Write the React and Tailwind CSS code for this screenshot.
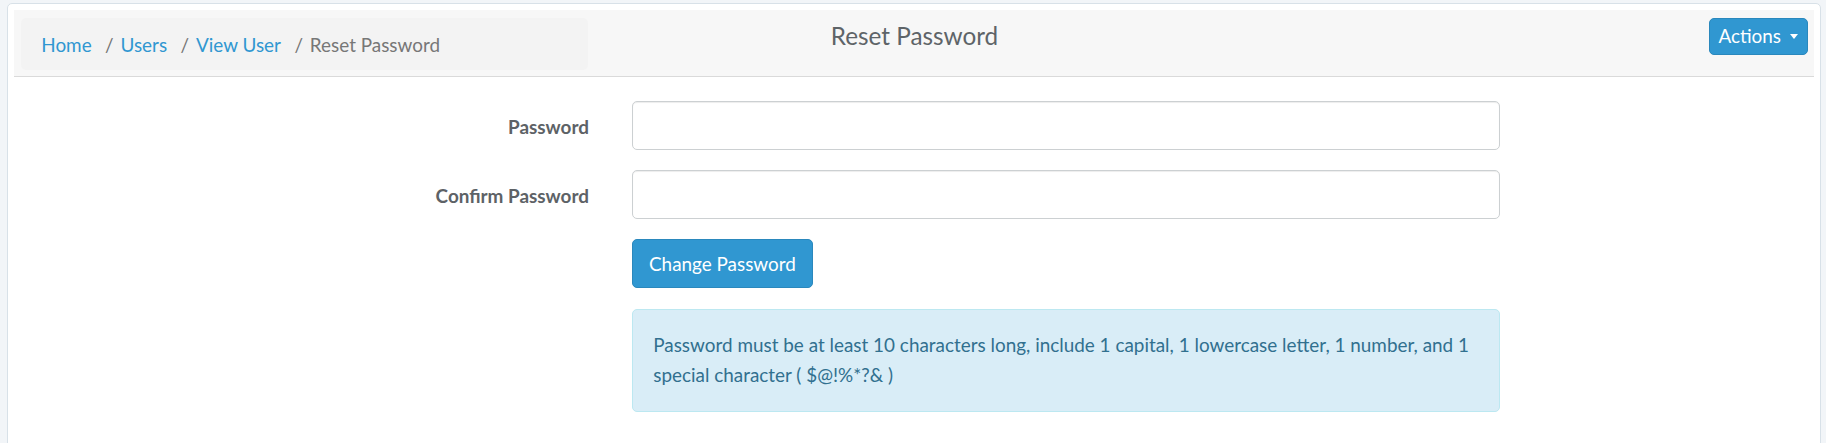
import { useState } from "react";

// Breadcrumb trail shown on the left of the panel header
const CRUMBS = [
  { label: "Home", href: "#" },
  { label: "Users", href: "#" },
  { label: "View User", href: "#" },
  { label: "Reset Password" },
];

export default function App() {
  const [password, setPassword] = useState("");
  const [confirm, setConfirm] = useState("");

  return (
    <div className="min-h-screen bg-[#f2f5f8] pt-[3px] pl-[7px] pr-[5px] font-['Lato','Liberation_Sans',sans-serif] text-[18.9px] leading-[30.24px] text-[#636b6f]">
      <div className="min-h-[470px] rounded-[5px] border border-[#d8e1e8] bg-white px-[6px] pt-[6px]">
        {/* Panel heading */}
        <div className="grid grid-cols-[1fr_auto_1fr] items-start border-b border-[#dadada] bg-[#f7f7f7] pt-[8px] pb-[6px] pl-[7px] pr-[6px]">
          <ol className="flex w-[567px] items-center rounded-[5px] bg-[#f3f3f3] px-[20.25px] pt-[11.5px] pb-[10.1px]">
            {CRUMBS.map((c, i) => (
              <li key={c.label} className="flex">
                {i > 0 && (
                  <span className="pl-[13.5px] pr-[2px] text-[#727272]">/{"\u00a0"}</span>
                )}
                {c.href ? (
                  <a href={c.href} className="text-[#3097d1]">
                    {c.label}
                  </a>
                ) : (
                  <span className="text-[#777777]">{c.label}</span>
                )}
              </li>
            ))}
          </ol>

          <h4 className="mt-[5.3px] text-[24.3px] leading-[26.7px] text-[#5e6468]">
            Reset Password
          </h4>

          <div className="flex justify-end">
            <button className="flex h-[37px] items-center rounded-[5px] border border-[#2a88bd] bg-[#3097d1] pl-[8px] pr-[9px] text-white">
              Actions
              <span className="ml-[9px] inline-block h-0 w-0 border-x-[4.5px] border-t-[5.5px] border-x-transparent border-t-white" />
            </button>
          </div>
        </div>

        {/* Form body */}
        <form
          className="-mx-[6px] grid grid-cols-[581px_868px] gap-x-[43px] gap-y-[20.25px] pt-[24px] pb-[40px]"
          onSubmit={(e) => e.preventDefault()}
        >
          <label className="pt-[11px] text-right font-bold text-[#5d6266]">Password</label>
          <input
            type="password"
            value={password}
            onChange={(e) => setPassword(e.target.value)}
            className="h-[49px] rounded-[5px] border border-[#ccd0d2] bg-white px-[16px] shadow-[inset_0_1px_1px_rgba(0,0,0,0.075)] outline-none"
          />

          <label className="pt-[11px] text-right font-bold text-[#5d6266]">Confirm Password</label>
          <input
            type="password"
            value={confirm}
            onChange={(e) => setConfirm(e.target.value)}
            className="h-[49px] rounded-[5px] border border-[#ccd0d2] bg-white px-[16px] shadow-[inset_0_1px_1px_rgba(0,0,0,0.075)] outline-none"
          />

          <div className="col-start-2">
            <button
              type="submit"
              className="h-[49px] rounded-[5px] border border-[#2a88bd] bg-[#3097d1] px-[16px] text-white"
            >
              Change Password
            </button>
          </div>

          <div className="col-start-2 rounded-[5px] border border-[#bce8f1] bg-[#d9edf7] px-[20.25px] py-[20.25px] text-[#31708f]">
            Password must be at least 10 characters long, include 1 capital, 1 lowercase letter, 1
            number, and 1 special character ( $@!%*?&amp; )
          </div>
        </form>
      </div>
    </div>
  );
}
